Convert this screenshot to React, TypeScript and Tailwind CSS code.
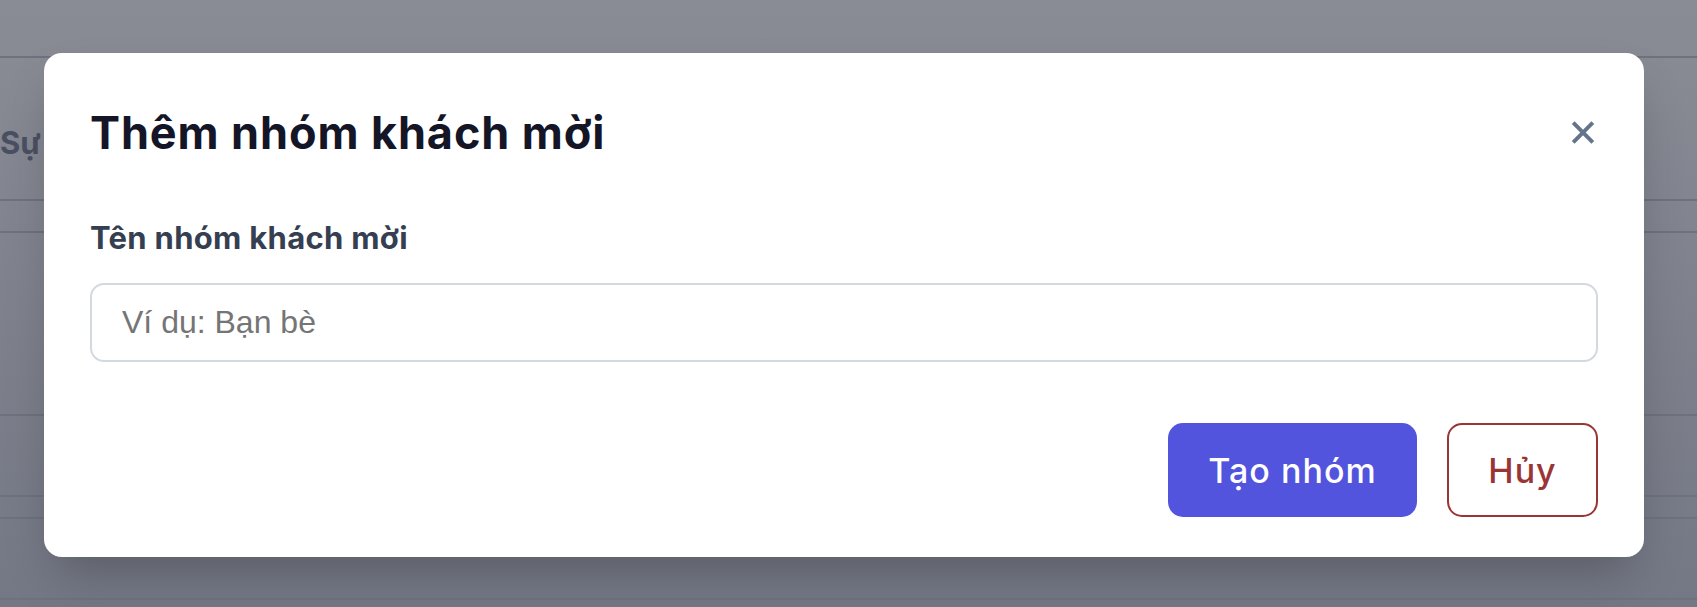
import React from 'react';

const rows = [58, 143, 32, 183, 81, 22, 81];

const App: React.FC = () => {
    return (
        <div className="relative w-full h-[607px] overflow-hidden bg-linear-to-b from-[#8a8c95] to-[#747885] font-['Inter','Noto_Sans',sans-serif]">
            {/* page behind the dialog */}
            <div className="flex flex-col">
                {rows.map((h, i) => (
                    <div key={i} className="border-b-2 border-[#6f727e] flex items-center" style={{ height: h }}>
                        {i === 1 && (
                            <span className="mt-[30px] text-[31px] font-bold text-[#4a5063]">Sự</span>
                        )}
                    </div>
                ))}
            </div>

            {/* dialog */}
            <div className="absolute left-[44px] top-[53px] w-[1600px] h-[504px] bg-white rounded-[18px] shadow-2xl px-[46px] pt-[53px] pb-[40px] flex flex-col">
                <div className="flex items-center justify-between">
                    <h2 className="text-[45px] leading-[53px] font-bold text-[#141627] tracking-[0.9px]">Thêm nhóm khách mời</h2>
                    <button className="mr-[3px] text-[#64748b]">
                        <svg width="24" height="25" viewBox="0 0 22 23" fill="none" stroke="currentColor" strokeWidth="3.6">
                            <path d="M2 2.5 L20 20.5 M20 2.5 L2 20.5" />
                        </svg>
                    </button>
                </div>

                <label className="mt-[59px] text-[31px] leading-[40px] font-bold text-[#363f51] tracking-[0.3px]">Tên nhóm khách mời</label>

                <input
                    type="text"
                    placeholder="Ví dụ: Bạn bè"
                    className="mt-[25px] h-[80px] w-full rounded-[14px] border-2 border-[#d4d9e0] px-[30px] text-[32px] font-['Liberation_Sans',Arial,sans-serif] placeholder:text-[#757575] outline-none"
                />

                <div className="mt-[61px] flex justify-end gap-[30px]">
                    <button className="h-[94px] w-[249px] rounded-[15px] bg-[#5254de] text-white text-[34px] font-medium tracking-[1px]">Tạo nhóm</button>
                    <button className="h-[94px] w-[151px] rounded-[15px] border-2 border-[#9a3535] text-[#9a3535] text-[34px] font-medium tracking-[1px]">Hủy</button>
                </div>
            </div>
        </div>
    );
};

export default App;
